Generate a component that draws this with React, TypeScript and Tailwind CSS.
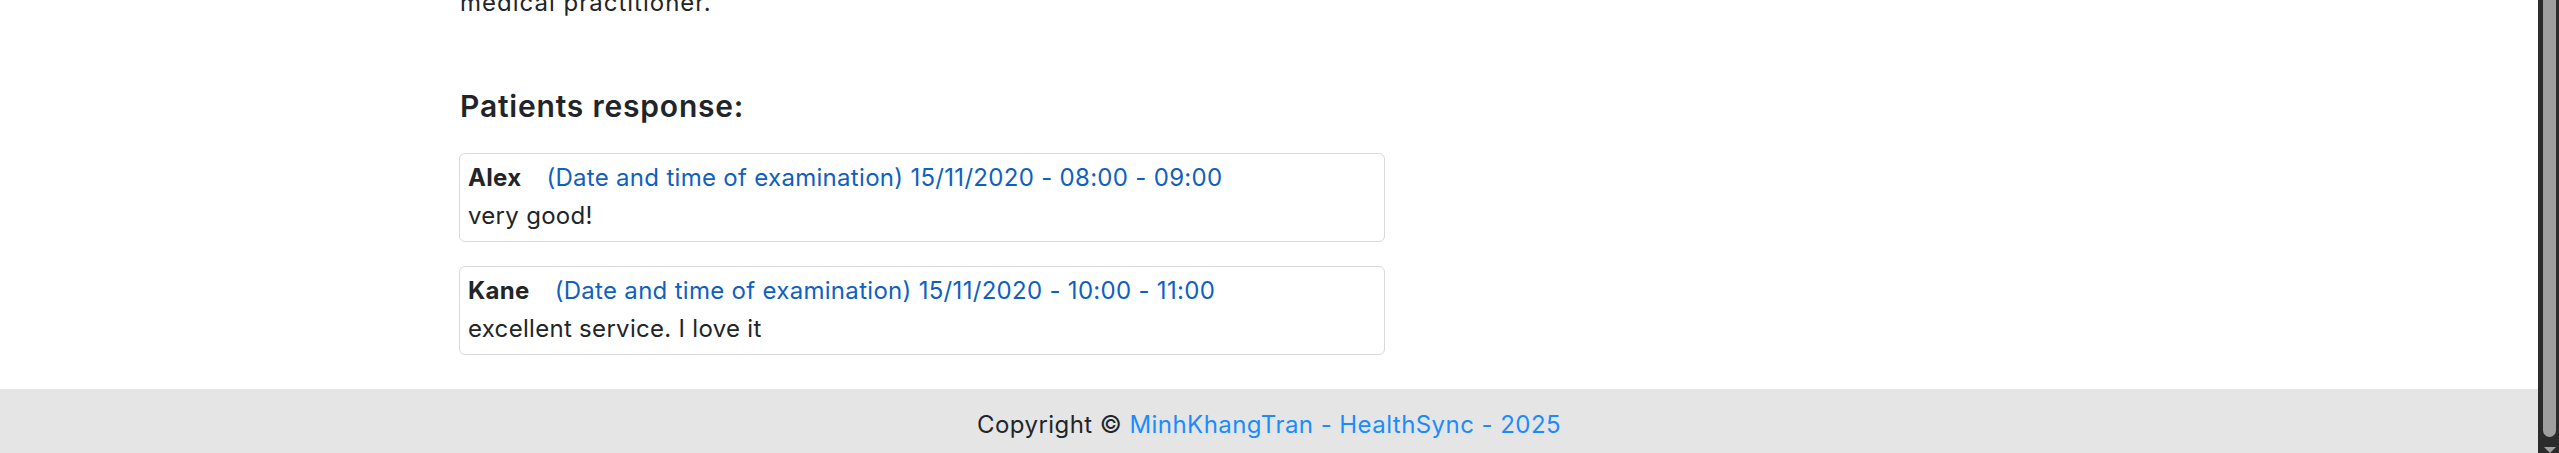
import React from "react";

const responses = [
  {
    name: "Alex",
    time: "(Date and time of examination) 15/11/2020 - 08:00 - 09:00",
    text: "very good!",
  },
  {
    name: "Kane",
    time: "(Date and time of examination) 15/11/2020 - 10:00 - 11:00",
    text: "excellent service. I love it",
  },
];

const App = () => {
  return (
    <div className="flex h-[453px] w-full overflow-hidden bg-white font-['Inter',sans-serif] text-[#212529]">
      <div className="flex flex-1 flex-col">
        <div className="pl-[460px]">
          <p className="mt-[-15px] text-[24px] leading-[36px] tracking-[1px]">
            medical practitioner.
          </p>
          <h4 className="mt-[67px] text-[30px] font-semibold leading-[36px] tracking-[0.8px]">
            Patients response:
          </h4>
          <div className="mt-[29px] flex w-[926px] ml-[-1px] flex-col gap-[24px]">
            {responses.map((r) => (
              <div
                key={r.name}
                className="rounded-[6px] border border-[#d9d9d9] px-2 pt-[5px] pb-[6px] text-[24px] leading-[38px] tracking-[0.3px]"
              >
                <div>
                  <span className="font-bold">{r.name}</span>
                  <span className="ml-[25px] text-[#0f60c0]">{r.time}</span>
                </div>
                <div>{r.text}</div>
              </div>
            ))}
          </div>
        </div>
        {/* footer */}
        <div className="mt-[34px] h-[100px] bg-[#e5e5e5] pt-[18px] text-center text-[24px] leading-[36px] tracking-[0.45px]">
          Copyright ©{" "}
          <a href="#" className="text-[#1a8cff]">
            MinhKhangTran - HealthSync - 2025
          </a>
        </div>
      </div>
      {/* scrollbar */}
      <div className="flex w-[21px] flex-col bg-[#2b2b2b] pl-[5px] pr-[3px]">
        <div className="h-[437px] rounded-b-full bg-[#9f9f9f]" />
        <div className="mt-[10px] flex justify-center">
          <div className="h-0 w-0 border-x-[6px] border-t-[6px] border-x-transparent border-t-[#9f9f9f]" />
        </div>
      </div>
    </div>
  );
};

export default App;
